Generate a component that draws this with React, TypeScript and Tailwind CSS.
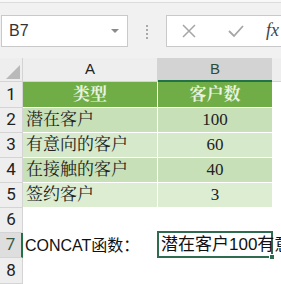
import React from "react";

const serif = { fontFamily: '"Liberation Serif", "Noto Serif CJK SC", "Noto Sans CJK SC", serif' };
const sans = { fontFamily: '"Liberation Sans", "Noto Sans CJK SC", sans-serif' };
const num = { fontFamily: 'Roboto, "Liberation Sans", sans-serif' };

export default function App() {
  const rows = [
    { n: 1, cls: "h-[26px]", a: "类型", b: "客户数", fill: "bg-[#70ad47]", head: true },
    { n: 2, cls: "h-[25px]", a: "潜在客户", b: "100", fill: "bg-[#c8e0b7]" },
    { n: 3, cls: "h-[25px]", a: "有意向的客户", b: "60", fill: "bg-[#d6e9ca]" },
    { n: 4, cls: "h-[25px]", a: "在接触的客户", b: "40", fill: "bg-[#c8e0b7]" },
    { n: 5, cls: "h-[25px]", a: "签约客户", b: "3", fill: "bg-[#dcedd2]" },
  ];
  return (
    <div className="w-[281px] h-[284px] overflow-hidden bg-[#f1f1f1] flex flex-col" style={sans}>
      {/* toolbar */}
      <div className="h-[2px] bg-[#f7f7f7]" />
      <div className="h-[1px] bg-[#dcdcdc]" />
      <div className="flex items-start pt-[12px] h-[56px] bg-[#f1f1f1]">
        <div className="ml-[1px] w-[127px] h-[32px] bg-white border border-[#c9c9c9] flex items-center pl-[7px] pr-[8px]">
          <span className="text-[16px] text-[#333]" style={sans}>B7</span>
          <div className="ml-auto w-0 h-0 border-l-[4px] border-r-[4px] border-t-[4px] border-l-transparent border-r-transparent border-t-[#8a8a8a]" />
        </div>
        <div className="ml-[18px] mt-[10px] flex flex-col gap-[2px]">
          <div className="w-[2px] h-[2px] bg-[#a9a9a9]" />
          <div className="w-[2px] h-[2px] bg-[#a9a9a9]" />
          <div className="w-[2px] h-[2px] bg-[#a9a9a9]" />
          <div className="w-[2px] h-[2px] bg-[#a9a9a9]" />
        </div>
        <div className="ml-[18px] flex-1 h-[32px] bg-white border border-[#c9c9c9] border-r-0 flex items-center">
          <svg width="14" height="14" viewBox="0 0 14 14" className="ml-[15px]">
            <path d="M1 1 L13 13 M13 1 L1 13" stroke="#a6a6a6" strokeWidth="1.5" />
          </svg>
          <svg width="16" height="14" viewBox="0 0 16 14" className="ml-[32px]">
            <path d="M1 7 L6 12 L15 2" stroke="#a6a6a6" strokeWidth="1.8" fill="none" />
          </svg>
          <span className="ml-[22px] text-[18px] italic text-[#444] whitespace-nowrap" style={serif}>fx</span>
        </div>
      </div>
      {/* column header */}
      <div className="flex h-[24px]">
        <div className="w-[23px] h-full bg-[#eeeeee] border-r border-b border-[#d4d4d4] flex items-end justify-end p-[2px]">
          <div className="w-0 h-0" style={{ borderBottom: "14px solid #b9b9b9", borderLeft: "14px solid transparent" }} />
        </div>
        <div className="w-[135px] h-full bg-[#eeeeee] border-r border-b border-[#d4d4d4] flex items-center justify-center text-[15px] text-[#222]" style={sans}>A</div>
        <div className="w-[114px] h-full bg-[#d3d3d3] border-b-2 border-[#217346] flex items-center justify-center text-[15px] text-[#2d4d38]" style={sans}>B</div>
        <div className="flex-1 h-full bg-[#eeeeee] border-b border-[#d4d4d4]" />
      </div>
      {/* data rows */}
      <div className="flex flex-col bg-white">
        {rows.map((r) => (
          <div key={r.n} className={`flex ${r.cls}`}>
            <div className="w-[23px] h-full bg-[#eeeeee] border-r border-b border-[#d4d4d4] flex items-center justify-center text-[17px] text-[#222]" style={num}>{r.n}</div>
            <div className={`w-[135px] h-full ${r.fill} border-r border-b border-white flex items-center ${r.head ? "justify-center font-bold text-[#e8f3df]" : "pl-[3px] text-[#222]"} text-[17px]`} style={serif}>{r.a}</div>
            <div className={`w-[114px] h-full ${r.fill} border-b border-white flex items-center justify-center ${r.head ? "font-bold text-[#e8f3df]" : "text-[#222]"} text-[17px]`} style={serif}>{r.b}</div>
            <div className="flex-1 h-full bg-white" />
          </div>
        ))}
        {/* row 6 */}
        <div className="flex h-[25px]">
          <div className="w-[23px] h-full bg-[#eeeeee] border-r border-b border-[#d4d4d4] flex items-center justify-center text-[17px] text-[#222]" style={num}>6</div>
          <div className="flex-1 bg-white" />
        </div>
        {/* row 7 */}
        <div className="flex h-[25px]">
          <div className="w-[23px] h-full bg-[#dedede] border-r-2 border-r-[#217346] border-b border-b-[#d4d4d4] flex items-center justify-center text-[17px] text-[#3c5a46]" style={num}>7</div>
          <div className="w-[134px] h-full flex items-center pl-[2px] text-[16px] text-[#111] whitespace-nowrap" style={sans}>CONCAT函数：</div>
          <div className="relative w-[116px] h-[27px] -mt-[2px] border-2 border-[#2f6b4f] flex items-center pl-[2px] text-[17px] text-[#111] whitespace-nowrap overflow-visible" style={sans}>
            <span className="relative z-0">潜在客户100有意向的客户60</span>
            <div className="absolute right-[-4px] bottom-[-4px] w-[6px] h-[6px] bg-[#2f6b4f] border border-white z-10" />
          </div>
          <div className="flex-1 bg-white" />
        </div>
        {/* row 8 */}
        <div className="flex h-[26px]">
          <div className="w-[23px] h-full bg-[#eeeeee] border-r border-b border-[#d4d4d4] flex items-center justify-center text-[17px] text-[#222]" style={num}>8</div>
          <div className="flex-1 bg-white" />
        </div>
      </div>
    </div>
  );
}
